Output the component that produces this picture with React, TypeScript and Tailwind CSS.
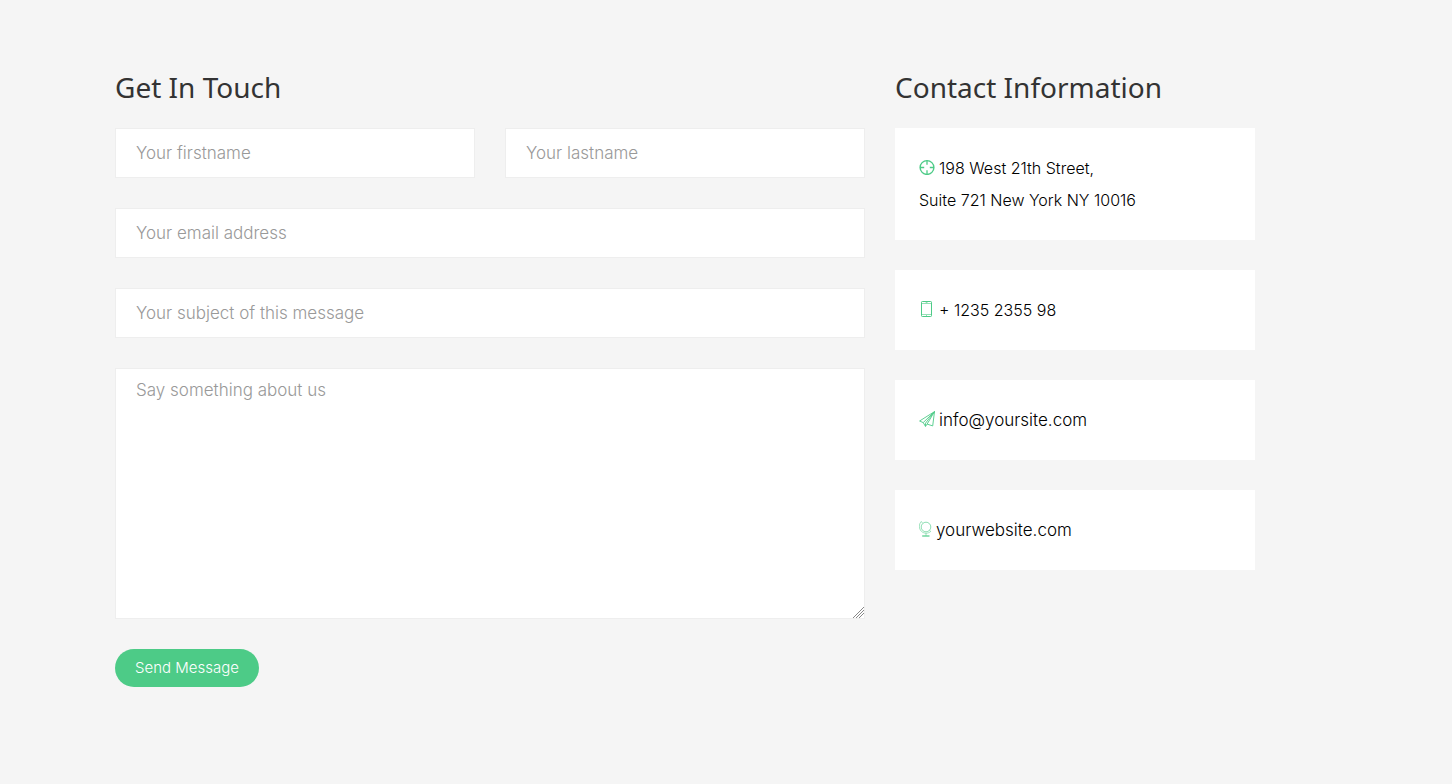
import type { ReactNode } from "react";

const fieldClass =
  "block w-full border border-[#eeeeee] bg-white px-5 font-['Inter',sans-serif] text-[17px] font-light text-black placeholder:text-[#999] placeholder:opacity-100 focus:outline-none focus:border-[#4dcb87]";

const gripClass =
  "[&::-webkit-resizer]:bg-[linear-gradient(135deg,white_13px,#888_13px_14px,white_14px_15px,#888_15px_16px,white_16px_17px,#888_17px_18px,white_18px)]";

const headingClass =
  "mb-6 font-['Noto_Sans',sans-serif] text-[28px] leading-[34px] font-normal text-[#333]";

function Field({ name, label, type = "text" }: { name: string; label: string; type?: string }) {
  return (
    <input name={name} type={type} aria-label={label} placeholder={label} className={`${fieldClass} h-[50px]`} />
  );
}

function Icon({ children, wide = true }: { children: ReactNode; wide?: boolean }) {
  return (
    <svg
      aria-hidden="true"
      viewBox={wide ? "0 0 16 16" : "0 0 13 16"}
      className={`${wide ? "w-4" : "w-[13px]"} mr-1 inline-block h-4 align-[-1px] text-[#4dcb87]`}
      fill="none"
      stroke="currentColor"
    >
      {children}
    </svg>
  );
}

function Card({ children }: { children: ReactNode }) {
  return <li className="bg-white p-6 text-base leading-8 text-black">{children}</li>;
}

export default function App() {
  return (
    <main className="min-h-screen bg-[#f5f5f5] pt-[70px] pr-6 pb-[97px] pl-6 font-['Inter',sans-serif] font-light lg:pr-[197px] lg:pl-[115px]">
      <div className="grid items-start gap-[30px] lg:grid-cols-[25fr_12fr]">
        <section>
          <h2 className={headingClass}>Get In Touch</h2>
          <form className="flex flex-col items-stretch gap-[30px]" onSubmit={(e) => e.preventDefault()}>
            <div className="grid gap-[30px] sm:grid-cols-2">
              <Field name="firstname" label="Your firstname" />
              <Field name="lastname" label="Your lastname" />
            </div>
            <Field name="email" label="Your email address" type="email" />
            <Field name="subject" label="Your subject of this message" />
            <textarea
              name="message"
              aria-label="Say something about us"
              placeholder="Say something about us"
              className={`${fieldClass} ${gripClass} h-[251px] resize py-[9px] leading-6`}
            />
            <button
              type="submit"
              className="self-start rounded-full bg-[#4dcb87] px-5 py-2 text-[15px] leading-[22px] font-light text-white"
            >
              Send Message
            </button>
          </form>
        </section>

        <section>
          <h2 className={headingClass}>Contact Information</h2>
          <ul className="flex flex-col gap-[30px]">
            <Card>
              <Icon>
                <circle cx="8" cy="8.5" r="6.9" strokeWidth="1.4" />
                <path d="M8 1.5v4.2M8 11.3v4.2M1 8.5h4.2M10.8 8.5H15" strokeWidth="1.3" />
              </Icon>
              198 West 21th Street,
              <br />
              Suite 721 New York NY 10016
            </Card>
            <Card>
              <Icon>
                <rect x="2.5" y=".5" width="10" height="15" rx=".8" />
                <path d="M2.5 2.5h10M2.5 13.5h10" strokeWidth=".8" opacity=".75" />
                <path d="M6.7 1.5h1.8M7 14.5h1" strokeWidth=".6" />
              </Icon>
              <a href="tel:+1235235598">+ 1235 2355 98</a>
            </Card>
            <Card>
              <Icon>
                <path
                  d="M15.5.6.6 10l3.6 1.6 2.3 3.8 1.6-2.3 5.6 1.8ZM15.5.6 4.2 11.6M15.5.6 6.5 12.2v3.2M15.5.6 8.1 13.1"
                  strokeWidth=".9"
                  strokeLinejoin="round"
                />
              </Icon>
              <a className="text-[17px]" href="mailto:info@yoursite.com">info@yoursite.com</a>
            </Card>
            <Card>
              <Icon wide={false}>
                <circle cx="7" cy="6" r="4.8" strokeWidth=".8" opacity=".8" />
                <path
                  d="M2.3.5C-.4 3.2-.1 7.8 2.3 10.2c2.6 2.6 6.9 2.6 9.5.2M2.3.5l1.2 1.6M11.8 10.4l-1.4-1.1M7 12.2v2.6"
                  strokeWidth=".7"
                  opacity=".8"
                />
                <path d="M3.2 15h7.3" strokeWidth="1.2" />
              </Icon>
              <a className="text-[17px]" href="https://yourwebsite.com">yourwebsite.com</a>
            </Card>
          </ul>
        </section>
      </div>
    </main>
  );
}
